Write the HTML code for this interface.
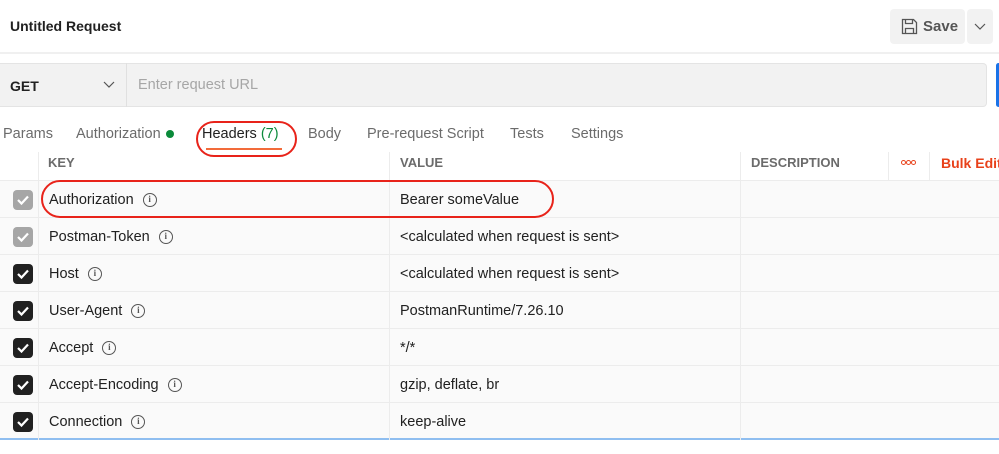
<!DOCTYPE html>
<html><head><style>
*{margin:0;padding:0;box-sizing:border-box}
body{width:999px;height:454px;overflow:hidden;background:#fff;font-family:"Liberation Sans",sans-serif;color:#212121;position:relative}
.a{position:absolute}
.t{font-size:14px;white-space:nowrap}
.row{position:absolute;left:0;width:999px;height:37px;background:#fafafa;border-bottom:1px solid #ececec}
.cb{position:absolute;left:13px;top:9px;width:20px;height:20px;border-radius:4px;background:#212121}
.cb.g{background:#a6a6a6}
.cb svg{position:absolute;left:3px;top:4px}
.k{position:absolute;left:49px;top:10px;font-size:14.5px;display:flex;align-items:center;height:18px}
.v{position:absolute;left:400px;top:11px;font-size:14.5px}
.i{display:inline-block;width:14px;height:14px;border:1.3px solid #555;border-radius:50%;font-size:9px;text-align:center;line-height:11px;margin-left:9px;color:#555;font-family:"Liberation Serif",serif;font-weight:bold}
.vl{position:absolute;top:0;width:1px;height:37px;background:#ececec}
.d{position:absolute;top:160px;width:5px;height:5px;border:1.3px solid #e8411a;border-radius:50%}
</style></head><body>
<div class="a t" style="left:10px;top:18px;font-weight:bold;font-size:14px">Untitled Request</div>
<div class="a" style="left:890px;top:9px;width:75px;height:35px;background:#f2f2f2;border-radius:4px"></div>
<svg class="a" style="left:901px;top:18px" width="17" height="17" viewBox="0 0 17 17"><path d="M1.5 1.5h11l3 3v11h-14z M4.5 1.5v4h7v-4 M4.5 15.5v-5h8v5" fill="none" stroke="#555" stroke-width="1.3"/></svg>
<div class="a t" style="left:923px;top:18px;font-size:15px;color:#555;font-weight:bold">Save</div>
<div class="a" style="left:967px;top:9px;width:26px;height:35px;background:#f2f2f2;border-radius:4px"></div>
<svg class="a" style="left:974px;top:23px" width="12" height="8"><path d="M1 1l5 5 5-5" fill="none" stroke="#555" stroke-width="1.2"/></svg>
<div class="a" style="left:0;top:52px;width:999px;height:2px;background:#f0f0f0"></div>
<div class="a" style="left:0;top:63px;width:987px;height:44px;background:#f2f2f2;border:1px solid #e4e4e4;border-left:none;border-radius:0 4px 4px 0"></div>
<div class="a" style="left:126px;top:63px;width:1px;height:44px;background:#e0e0e0"></div>
<div class="a t" style="left:10px;top:78px;font-weight:bold;font-size:14px">GET</div>
<svg class="a" style="left:103px;top:81px" width="12" height="8"><path d="M1 1l5 5 5-5" fill="none" stroke="#555" stroke-width="1.2"/></svg>
<div class="a t" style="left:138px;top:77px;color:#a6a6a6;font-size:14.5px">Enter request URL</div>
<div class="a" style="left:996px;top:63px;width:5px;height:44px;background:#1a73e8;border-radius:3px"></div>
<div class="a t" style="left:3px;top:126px;color:#6b6b6b;font-size:14.5px">Params</div>
<div class="a t" style="left:76px;top:126px;color:#6b6b6b;font-size:14.5px">Authorization</div>
<div class="a" style="left:166px;top:130px;width:8px;height:8px;border-radius:50%;background:#0a8a3a"></div>
<div class="a t" style="left:202px;top:126px;color:#212121;font-size:14.5px">Headers <span style="color:#0a8a3a">(7)</span></div>
<div class="a" style="left:206px;top:148px;width:76px;height:2px;background:#f26b3a"></div>
<div class="a" style="left:196px;top:121px;width:101px;height:36px;border:2.5px solid #e8231a;border-radius:18px"></div>
<div class="a t" style="left:308px;top:126px;color:#6b6b6b;font-size:14.5px">Body</div>
<div class="a t" style="left:367px;top:126px;color:#6b6b6b;font-size:14.5px">Pre-request Script</div>
<div class="a t" style="left:510px;top:126px;color:#6b6b6b;font-size:14.5px">Tests</div>
<div class="a t" style="left:571px;top:126px;color:#6b6b6b;font-size:14.5px">Settings</div>
<div class="a" style="left:0;top:152px;width:999px;height:29px;border-bottom:1px solid #ececec"></div>
<div class="a" style="left:38px;top:152px;width:1px;height:29px;background:#ececec"></div>
<div class="a" style="left:389px;top:152px;width:1px;height:29px;background:#ececec"></div>
<div class="a" style="left:740px;top:152px;width:1px;height:29px;background:#ececec"></div>
<div class="a" style="left:888px;top:152px;width:1px;height:29px;background:#ececec"></div>
<div class="a" style="left:929px;top:152px;width:1px;height:29px;background:#ececec"></div>
<div class="a t" style="left:48px;top:155px;color:#6b6b6b;font-weight:bold;font-size:13px">KEY</div>
<div class="a t" style="left:400px;top:155px;color:#6b6b6b;font-weight:bold;font-size:13px">VALUE</div>
<div class="a t" style="left:751px;top:155px;color:#6b6b6b;font-weight:bold;font-size:13px">DESCRIPTION</div>
<div class="d" style="left:901px"></div><div class="d" style="left:906px"></div><div class="d" style="left:911px"></div>
<div class="a t" style="left:941px;top:155px;color:#e8411a;font-weight:bold;font-size:14px">Bulk Edit</div>

<div class="row" style="top:181px"><div class="cb g"><svg width="14" height="12"><path d="M2 6l3.5 3.5L12 2.5" fill="none" stroke="#fff" stroke-width="2.2"/></svg></div><div class="vl" style="left:38px"></div><div class="vl" style="left:389px"></div><div class="vl" style="left:740px"></div><div class="k">Authorization<span class="i">i</span></div><div class="v">Bearer someValue</div></div>
<div class="row" style="top:218px"><div class="cb g"><svg width="14" height="12"><path d="M2 6l3.5 3.5L12 2.5" fill="none" stroke="#fff" stroke-width="2.2"/></svg></div><div class="vl" style="left:38px"></div><div class="vl" style="left:389px"></div><div class="vl" style="left:740px"></div><div class="k">Postman-Token<span class="i">i</span></div><div class="v">&lt;calculated when request is sent&gt;</div></div>
<div class="row" style="top:255px"><div class="cb"><svg width="14" height="12"><path d="M2 6l3.5 3.5L12 2.5" fill="none" stroke="#fff" stroke-width="2.2"/></svg></div><div class="vl" style="left:38px"></div><div class="vl" style="left:389px"></div><div class="vl" style="left:740px"></div><div class="k">Host<span class="i">i</span></div><div class="v">&lt;calculated when request is sent&gt;</div></div>
<div class="row" style="top:292px"><div class="cb"><svg width="14" height="12"><path d="M2 6l3.5 3.5L12 2.5" fill="none" stroke="#fff" stroke-width="2.2"/></svg></div><div class="vl" style="left:38px"></div><div class="vl" style="left:389px"></div><div class="vl" style="left:740px"></div><div class="k">User-Agent<span class="i">i</span></div><div class="v">PostmanRuntime/7.26.10</div></div>
<div class="row" style="top:329px"><div class="cb"><svg width="14" height="12"><path d="M2 6l3.5 3.5L12 2.5" fill="none" stroke="#fff" stroke-width="2.2"/></svg></div><div class="vl" style="left:38px"></div><div class="vl" style="left:389px"></div><div class="vl" style="left:740px"></div><div class="k">Accept<span class="i">i</span></div><div class="v">*/*</div></div>
<div class="row" style="top:366px"><div class="cb"><svg width="14" height="12"><path d="M2 6l3.5 3.5L12 2.5" fill="none" stroke="#fff" stroke-width="2.2"/></svg></div><div class="vl" style="left:38px"></div><div class="vl" style="left:389px"></div><div class="vl" style="left:740px"></div><div class="k">Accept-Encoding<span class="i">i</span></div><div class="v">gzip, deflate, br</div></div>
<div class="row" style="top:403px;border-bottom:2px solid #8fbef0;height:37px"><div class="cb"><svg width="14" height="12"><path d="M2 6l3.5 3.5L12 2.5" fill="none" stroke="#fff" stroke-width="2.2"/></svg></div><div class="vl" style="left:38px"></div><div class="vl" style="left:389px"></div><div class="vl" style="left:740px"></div><div class="k">Connection<span class="i">i</span></div><div class="v">keep-alive</div></div>

<div class="a" style="left:41px;top:180px;width:513px;height:38px;border:2.5px solid #e8231a;border-radius:19px"></div>
</body></html>
